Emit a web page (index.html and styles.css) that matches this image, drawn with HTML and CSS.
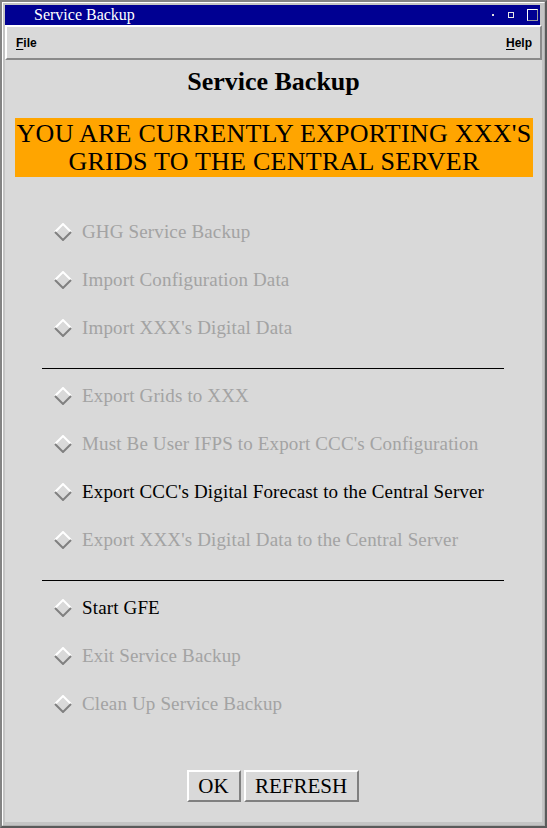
FILE: index.html
```html
<!DOCTYPE html>
<html>
<head>
<meta charset="utf-8">
<link rel="stylesheet" href="styles.css">
</head>
<body>
<div class="window">
  <div class="frame">
    <div class="titlebar">
      <span class="title">Service Backup</span>
      <span class="tb-dot"></span>
      <span class="tb-min"></span>
      <span class="tb-max"></span>
    </div>
    <div class="menubar">
      <span class="menu"><u>F</u>ile</span>
      <span class="menu"><u>H</u>elp</span>
    </div>
    <div class="panel">
      <h1 class="heading">Service Backup</h1>
      <div class="banner">YOU ARE CURRENTLY EXPORTING XXX'S<br>GRIDS TO THE CENTRAL SERVER</div>
      <div class="options">
        <div class="opt disabled"><svg class="dia" viewBox="0 0 18 18"><path d="M1 9 L9 1 L17 9" class="hi"/><path d="M1 9 L9 17 L17 9" class="lo"/></svg><span>GHG Service Backup</span></div>
        <div class="opt disabled"><svg class="dia" viewBox="0 0 18 18"><path d="M1 9 L9 1 L17 9" class="hi"/><path d="M1 9 L9 17 L17 9" class="lo"/></svg><span>Import Configuration Data</span></div>
        <div class="opt disabled"><svg class="dia" viewBox="0 0 18 18"><path d="M1 9 L9 1 L17 9" class="hi"/><path d="M1 9 L9 17 L17 9" class="lo"/></svg><span>Import XXX's Digital Data</span></div>
        <div class="sep"></div>
        <div class="opt disabled"><svg class="dia" viewBox="0 0 18 18"><path d="M1 9 L9 1 L17 9" class="hi"/><path d="M1 9 L9 17 L17 9" class="lo"/></svg><span>Export Grids to XXX</span></div>
        <div class="opt disabled"><svg class="dia" viewBox="0 0 18 18"><path d="M1 9 L9 1 L17 9" class="hi"/><path d="M1 9 L9 17 L17 9" class="lo"/></svg><span>Must Be User IFPS to Export CCC's Configuration</span></div>
        <div class="opt"><svg class="dia" viewBox="0 0 18 18"><path d="M1 9 L9 1 L17 9" class="hi"/><path d="M1 9 L9 17 L17 9" class="lo"/></svg><span>Export CCC's Digital Forecast to the Central Server</span></div>
        <div class="opt disabled"><svg class="dia" viewBox="0 0 18 18"><path d="M1 9 L9 1 L17 9" class="hi"/><path d="M1 9 L9 17 L17 9" class="lo"/></svg><span>Export XXX's Digital Data to the Central Server</span></div>
        <div class="sep"></div>
        <div class="opt"><svg class="dia" viewBox="0 0 18 18"><path d="M1 9 L9 1 L17 9" class="hi"/><path d="M1 9 L9 17 L17 9" class="lo"/></svg><span>Start GFE</span></div>
        <div class="opt disabled"><svg class="dia" viewBox="0 0 18 18"><path d="M1 9 L9 1 L17 9" class="hi"/><path d="M1 9 L9 17 L17 9" class="lo"/></svg><span>Exit Service Backup</span></div>
        <div class="opt disabled"><svg class="dia" viewBox="0 0 18 18"><path d="M1 9 L9 1 L17 9" class="hi"/><path d="M1 9 L9 17 L17 9" class="lo"/></svg><span>Clean Up Service Backup</span></div>
      </div>
      <div class="buttons">
        <button class="btn btn-ok">OK</button>
        <button class="btn btn-refresh">REFRESH</button>
      </div>
    </div>
  </div>
</div>
</body>
</html>
```

FILE: styles.css
```css
* { box-sizing: border-box; }
html, body { margin: 0; padding: 0; }
body { width: 547px; height: 828px; background: #d9d9d9; overflow: hidden; }

.window {
  width: 547px; height: 828px;
  border-style: solid; border-width: 2px;
  border-color: #848484 #5a5a5a #5a5a5a #848484;
  background: #c4c4c4;
}
.frame {
  height: 100%;
  border-style: solid; border-width: 1px;
  border-color: #ffffff #b0b0b0 #b0b0b0 #ffffff;
  padding: 2px 2px 3px 2px;
  display: flex; flex-direction: column;
}
.titlebar {
  height: 20px; background: #000092;
  display: flex; align-items: center;
  padding-left: 29px; padding-right: 2px;
  margin-right: 2px;
  flex-shrink: 0;
}
.title {
  font-family: "Liberation Serif", serif; font-size: 16px; color: #fff;
  flex: 1;
}
.tb-dot { width: 2px; height: 2px; background: #e0e0e0; margin-right: 14px; }
.tb-min { width: 6px; height: 6px; border: 1px solid #e8e8e8; margin-right: 13px; }
.tb-max { width: 11px; height: 12px; border-style: solid; border-width: 1px; border-color: #ffffff #9a9a9a #9a9a9a #ffffff; }

.menubar {
  height: 35px; flex-shrink: 0;
  background: #d9d9d9;
  border-style: solid; border-width: 2px 2px 2px 2px;
  border-color: #ffffff #8a8a8a #8a8a8a #ffffff;
  display: flex; justify-content: space-between; align-items: center;
  padding: 0 8px 0 9px;
  font-family: "Liberation Sans", Arial, sans-serif; font-weight: bold; font-size: 12px; color: #000;
}
.menu u { text-decoration: underline; text-underline-offset: 2px; }

.panel {
  flex: 1; background: #d9d9d9;
  display: flex; flex-direction: column;
}
.heading {
  margin: 7px 0 0 0; height: 30px;
  font-family: "Liberation Serif", serif; font-weight: bold; font-size: 26px; line-height: 30px;
  text-align: center; color: #000;
}
.banner {
  margin: 21px 9px 0 10px;
  background: #ffa500;
  height: 59px; padding-top: 2px;
  font-family: "Liberation Serif", serif; font-size: 26px; line-height: 28px;
  text-align: center; color: #000;
  letter-spacing: 0.25px;
}
.options { margin-top: 31px; display: flex; flex-direction: column; }
.opt {
  height: 48px; display: flex; align-items: center;
  padding-left: 49px;
  font-family: "Liberation Serif", serif; font-size: 19px; color: #000;
  letter-spacing: 0.15px;
}
.opt.disabled { color: #a3a3a3; }
.dia { width: 18px; height: 18px; margin-right: 10px; flex-shrink: 0; }
.dia path { fill: none; stroke-width: 2; }
.dia .hi { stroke: #ffffff; }
.dia .lo { stroke: #808080; }
.sep {
  box-sizing: content-box; height: 16px;
  margin: 0 38px 3px 37px;
  border-bottom: 1px solid #000;
}

.buttons {
  margin-top: 42px;
  display: flex; justify-content: center; gap: 3px;
  padding-right: 2px;
}
.btn {
  height: 32px; margin: 0; padding: 0;
  background: #d9d9d9;
  border-style: solid; border-width: 2px;
  border-color: #ffffff #808080 #808080 #ffffff;
  font-family: "Liberation Serif", serif; font-size: 21px; color: #000;
  line-height: 26px;
}
.btn-ok { width: 54px; }
.btn-refresh { width: 115px; }
```
